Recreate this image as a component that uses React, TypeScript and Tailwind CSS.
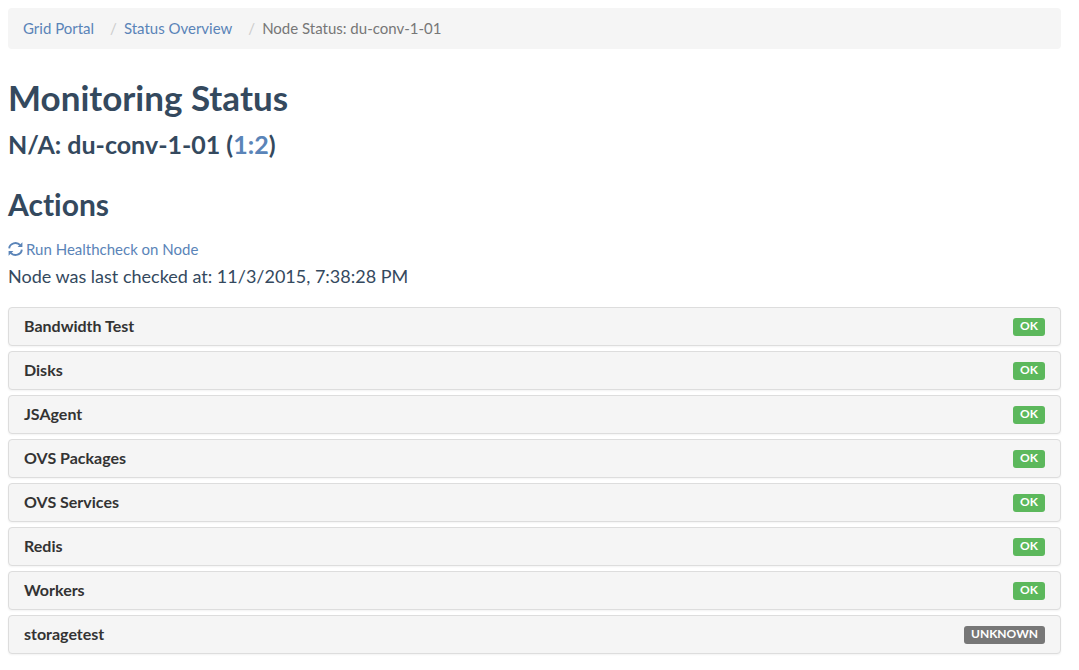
import React from "react";

type Status = "OK" | "UNKNOWN";

const checks: { name: string; status: Status }[] = [
  { name: "Bandwidth Test", status: "OK" },
  { name: "Disks", status: "OK" },
  { name: "JSAgent", status: "OK" },
  { name: "OVS Packages", status: "OK" },
  { name: "OVS Services", status: "OK" },
  { name: "Redis", status: "OK" },
  { name: "Workers", status: "OK" },
  { name: "storagetest", status: "UNKNOWN" },
];

const badgeColor: Record<Status, string> = {
  OK: "bg-[#5cb85c]",
  UNKNOWN: "bg-[#777777]",
};

function RefreshIcon() {
  return (
    <svg viewBox="0 0 15 15" className="size-[15px]" aria-hidden="true">
      <g fill="none" stroke="currentColor" strokeWidth="1.9">
        <path d="M1.2 6.4A6.2 5.8 0 0 1 12.2 3.2" />
        <path d="M13.8 7.6A6.2 5.8 0 0 1 2.8 10.8" />
      </g>
      <path fill="currentColor" d="M14.4 0.2V5H9.6ZM0.6 13.8V9H5.4Z" />
    </svg>
  );
}

export default function App() {
  return (
    <main className="py-2 pr-[18px] pl-2 font-['Lato',sans-serif] text-[15px] leading-[21px] text-[#34495e] [font-variant-ligatures:none]">
      <nav aria-label="Breadcrumb" className="rounded bg-[#f5f5f5] px-[15px] py-[10px]">
        <ol className="flex">
          <li><a href="#portal" className="text-[#5a84b8]">Grid Portal</a></li>
          <li className="before:pr-[7px] before:pl-4 before:text-[#cccccc] before:content-['/']"><a href="#status" className="text-[#5a84b8]">Status Overview</a></li>
          <li className="text-[#777777] before:pr-[7px] before:pl-4 before:text-[#cccccc] before:content-['/']">Node Status: du-conv-1-01</li>
        </ol>
      </nav>
      <h1 className="mt-7 text-[35px] leading-10 font-bold">Monitoring Status</h1>
      <h2 className="mt-[11px] text-[25px] leading-8 font-bold">N/A: du-conv-1-01 (<a href="#node" className="text-[#5a84b8]">1:2</a>)</h2>
      <h2 className="mt-6 text-[30px] leading-10 font-bold">Actions</h2>
      <a href="#run" className="mt-[15px] flex items-center gap-[3px] text-[#5a84b8]"><RefreshIcon />Run Healthcheck on Node</a>
      <p className="mt-[2px] text-lg">Node was last checked at: 11/3/2015, 7:38:28 PM</p>
      <div className="mt-[17px] flex flex-col gap-[5px]">
        {checks.map((check) => (
          <button key={check.name} type="button" className="flex items-end justify-between rounded border border-[#dddddd] bg-[#f5f5f5] px-[15px] pt-2 pb-[9px] text-base leading-5 font-bold text-[#333333] shadow-xs">
            <span>{check.name}</span>
            <span className={`rounded-[3px] px-[7px] pb-[2px] text-xs text-white ${badgeColor[check.status]}`}>{check.status}</span>
          </button>
        ))}
      </div>
    </main>
  );
}
